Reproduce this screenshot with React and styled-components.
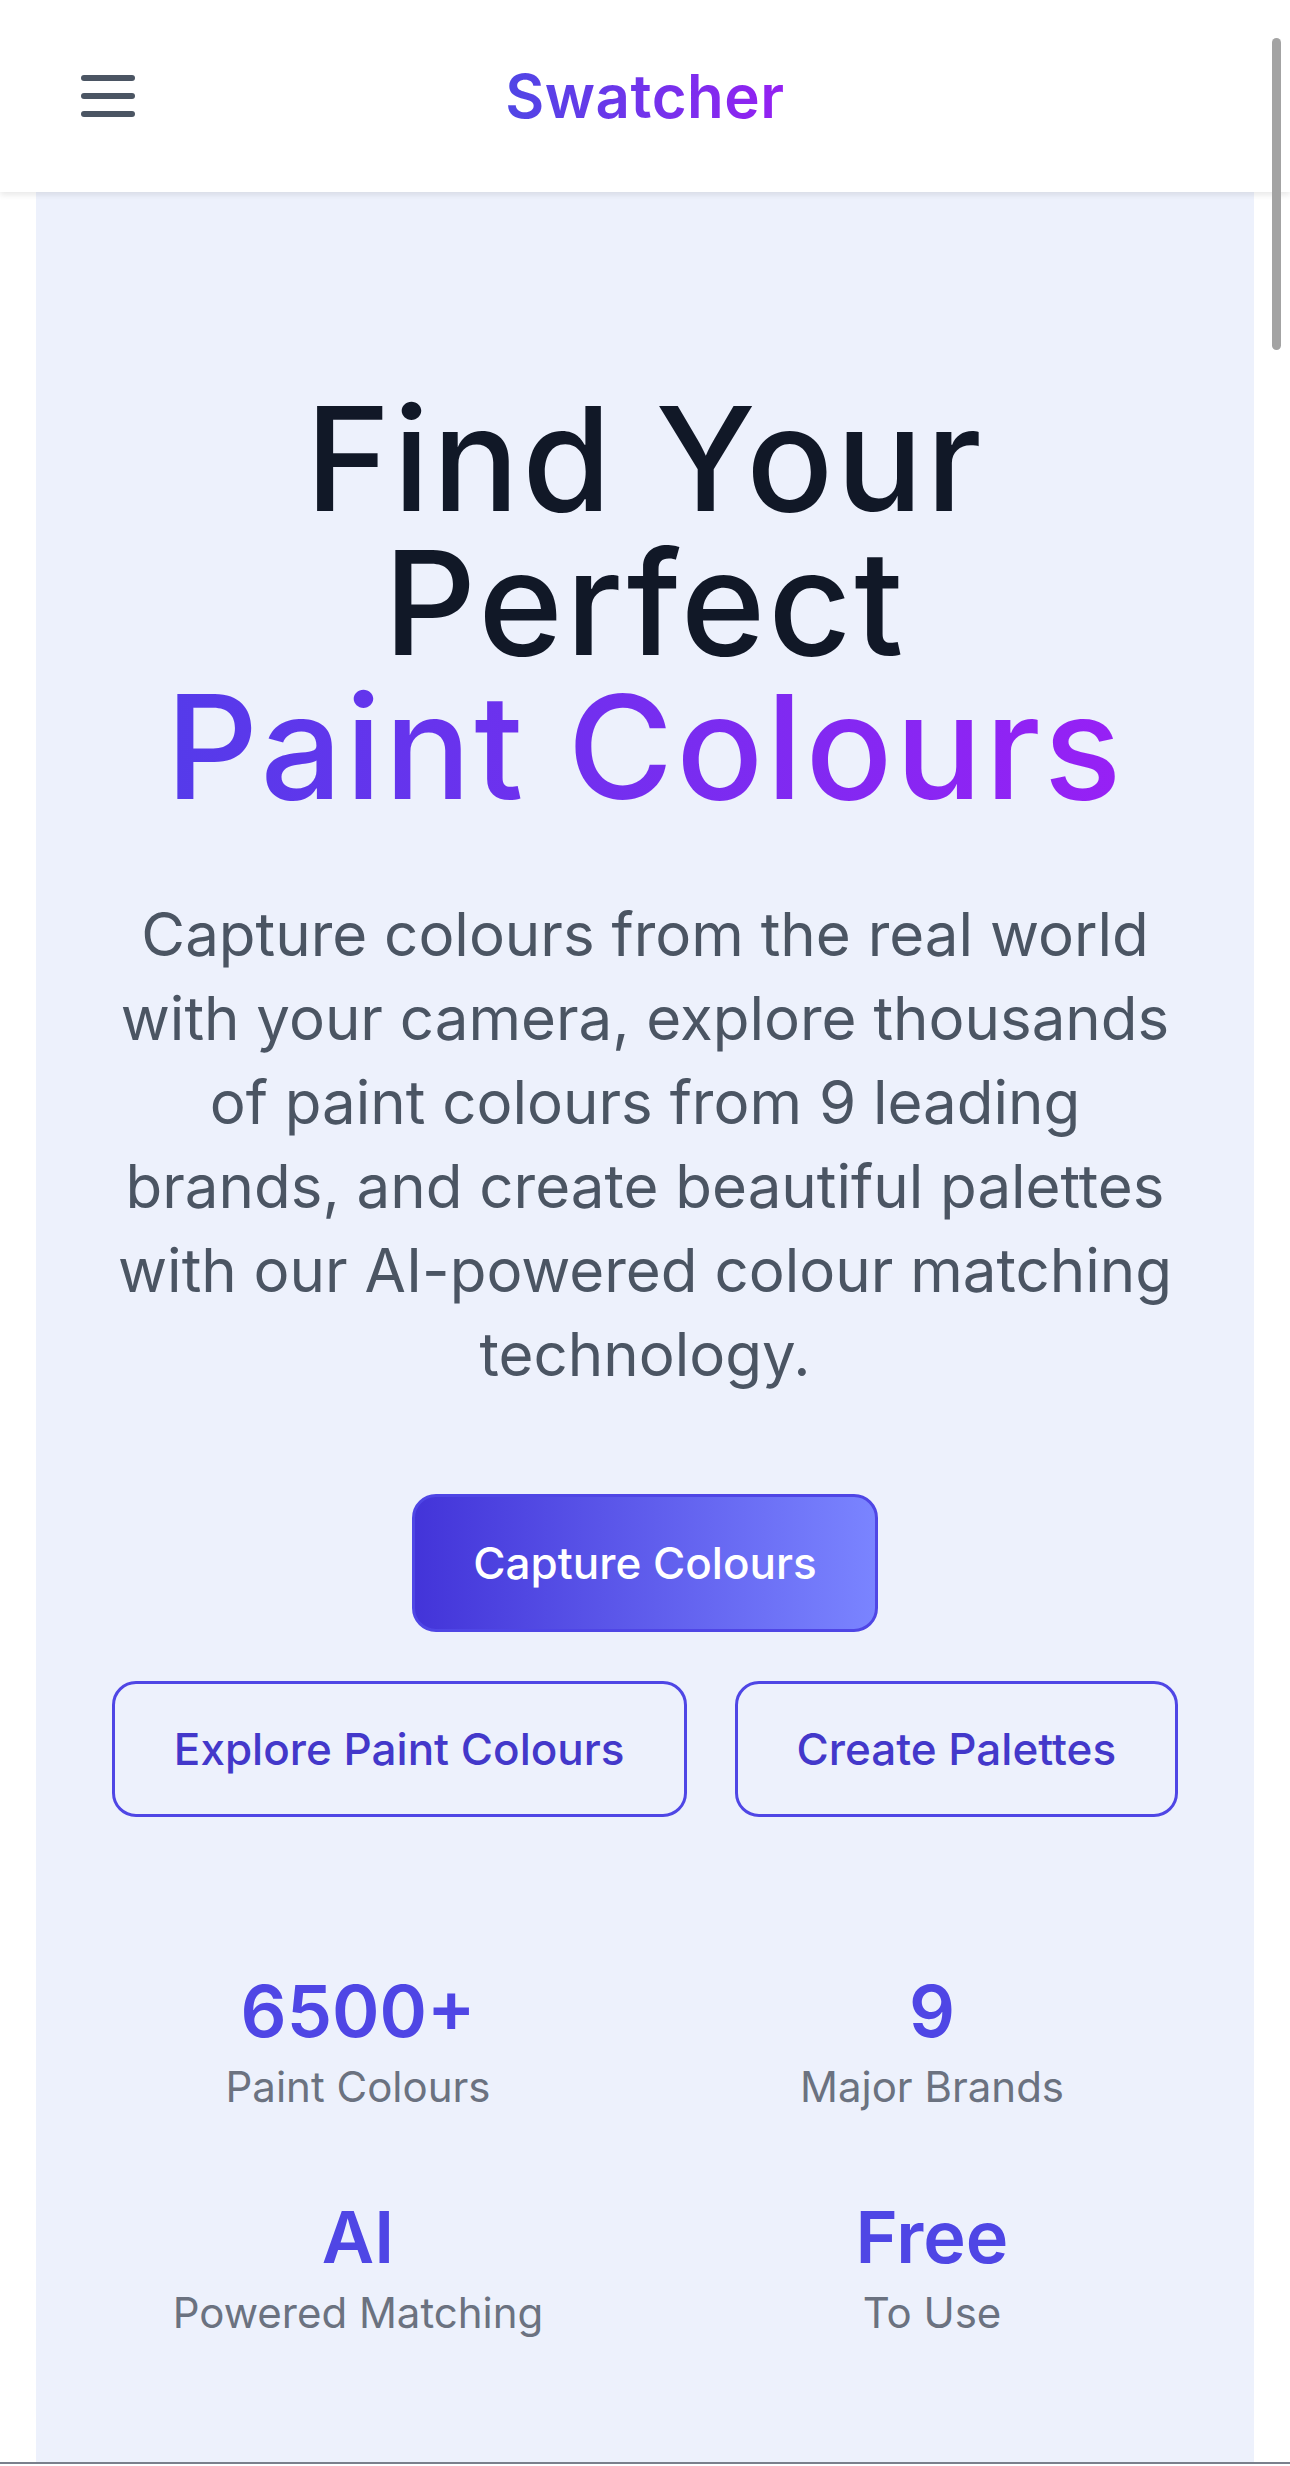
import styled, { createGlobalStyle } from 'styled-components';

const GlobalStyle = createGlobalStyle`
    * {
        box-sizing: border-box;
    }
    html, body {
        margin: 0;
        padding: 0;
        height: 2466px;
        overflow: hidden;
        background: #ffffff;
        font-family: "Inter", "Noto Sans", sans-serif;
    }
`;

const stats = [
    { value: '6500+', label: 'Paint Colours' },
    { value: '9', label: 'Major Brands' },
    { value: 'AI', label: 'Powered Matching' },
    { value: 'Free', label: 'To Use' },
];

function MenuIcon() {
    return (
        <svg width="72" height="72" viewBox="0 0 24 24" fill="none" stroke="#4B5563" strokeWidth="2" strokeLinecap="round">
            <line x1="4" y1="6" x2="20" y2="6" />
            <line x1="4" y1="12" x2="20" y2="12" />
            <line x1="4" y1="18" x2="20" y2="18" />
        </svg>
    );
}

export default function App() {
    return (
        <>
            <GlobalStyle />
            <Page>
                <Header>
                    <MenuButton aria-label="Menu">
                        <MenuIcon />
                    </MenuButton>
                    <Logo>Swatcher</Logo>
                    <Spacer />
                </Header>

                <Hero>
                    <Titulo>
                        Find Your Perfect
                        <Destaque>Paint Colours</Destaque>
                    </Titulo>
                    <Texto>
                        Capture colours from the real world with your camera, explore thousands
                        of paint colours from 9 leading brands, and create beautiful palettes
                        with our AI-powered colour matching technology.
                    </Texto>

                    <BotaoPrincipal>Capture Colours</BotaoPrincipal>
                    <Linha>
                        <BotaoContorno>Explore Paint Colours</BotaoContorno>
                        <BotaoContorno>Create Palettes</BotaoContorno>
                    </Linha>

                    <Grade>
                        {stats.map((s) => (
                            <Stat key={s.value}>
                                <Valor>{s.value}</Valor>
                                <Rotulo>{s.label}</Rotulo>
                            </Stat>
                        ))}
                    </Grade>
                </Hero>
                <Rodape />
            </Page>
            <ScrollThumb />
        </>
    );
}

const Page = styled.div`
    display: flex;
    flex-direction: column;
    height: 2466px;
`;

const Header = styled.header`
    position: relative;
    z-index: 2;
    height: 192px;
    flex-shrink: 0;
    display: flex;
    align-items: center;
    justify-content: space-between;
    padding: 0 48px 0 48px;
    background: #ffffff;
    box-shadow: 0 3px 6px rgba(0, 0, 0, 0.09);
`;

const MenuButton = styled.button`
    width: 120px;
    height: 120px;
    padding: 0 0 0 24px;
    display: flex;
    align-items: center;
    border: none;
    background: transparent;
`;

const Spacer = styled.div`
    width: 120px;
`;

const Logo = styled.h1`
    margin: 0;
    font-size: 60px;
    font-weight: 600;
    letter-spacing: 0.5px;
    line-height: 84px;
    background: linear-gradient(to right, #4f46e5, #9520f2);
    -webkit-background-clip: text;
    background-clip: text;
    color: transparent;
`;

const Hero = styled.main`
    flex: 1;
    margin: 0 36px;
    padding: 195px 48px 0;
    display: flex;
    flex-direction: column;
    align-items: center;
    background: #edf1fc;
`;

const Titulo = styled.h2`
    margin: 0;
    font-size: 144px;
    line-height: 144px;
    font-weight: 500;
    letter-spacing: 3px;
    color: #111827;
    text-align: center;
`;

const Destaque = styled.span`
    display: block;
    background: linear-gradient(to right, #4f3de9, #9d1ef6);
    -webkit-background-clip: text;
    background-clip: text;
    color: transparent;
`;

const Texto = styled.p`
    max-width: 1075px;
    margin: 73px 0 0;
    font-size: 60px;
    line-height: 84px;
    color: #4b5563;
    text-align: center;
`;

const BotaoPrincipal = styled.button`
    margin-top: 98px;
    padding: 33px 58px;
    border: 3px solid #4f46e5;
    border-radius: 24px;
    background: linear-gradient(to right, #4334d9, #7a84ff);
    color: #ffffff;
    font-family: "Inter", sans-serif;
    font-size: 44px;
    line-height: 66px;
    font-weight: 500;
`;

const Linha = styled.div`
    display: flex;
    gap: 48px;
    margin-top: 49px;
`;

const BotaoContorno = styled.button`
    padding: 32px 59px;
    border: 3px solid #4f46e5;
    border-radius: 24px;
    background: transparent;
    color: #4338ca;
    font-family: "Inter", sans-serif;
    font-size: 44px;
    line-height: 66px;
    font-weight: 500;
`;

const Grade = styled.div`
    width: 1148px;
    margin-top: 148px;
    display: grid;
    grid-template-columns: 1fr 1fr;
    row-gap: 74px;
`;

const Stat = styled.div`
    display: flex;
    flex-direction: column;
    align-items: center;
`;

const Valor = styled.div`
    font-size: 72px;
    line-height: 92px;
    font-weight: 600;
    color: #4f46e5;
`;

const Rotulo = styled.div`
    font-size: 42px;
    line-height: 60px;
    color: #6b7280;
`;

const Rodape = styled.footer`
    height: 4px;
    flex-shrink: 0;
    border-top: 2px solid #7b808c;
    background: #ffffff;
`;

const ScrollThumb = styled.div`
    position: fixed;
    top: 38px;
    right: 9px;
    width: 9px;
    height: 312px;
    border-radius: 5px;
    background: #a3a3a3;
    z-index: 5;
`;
